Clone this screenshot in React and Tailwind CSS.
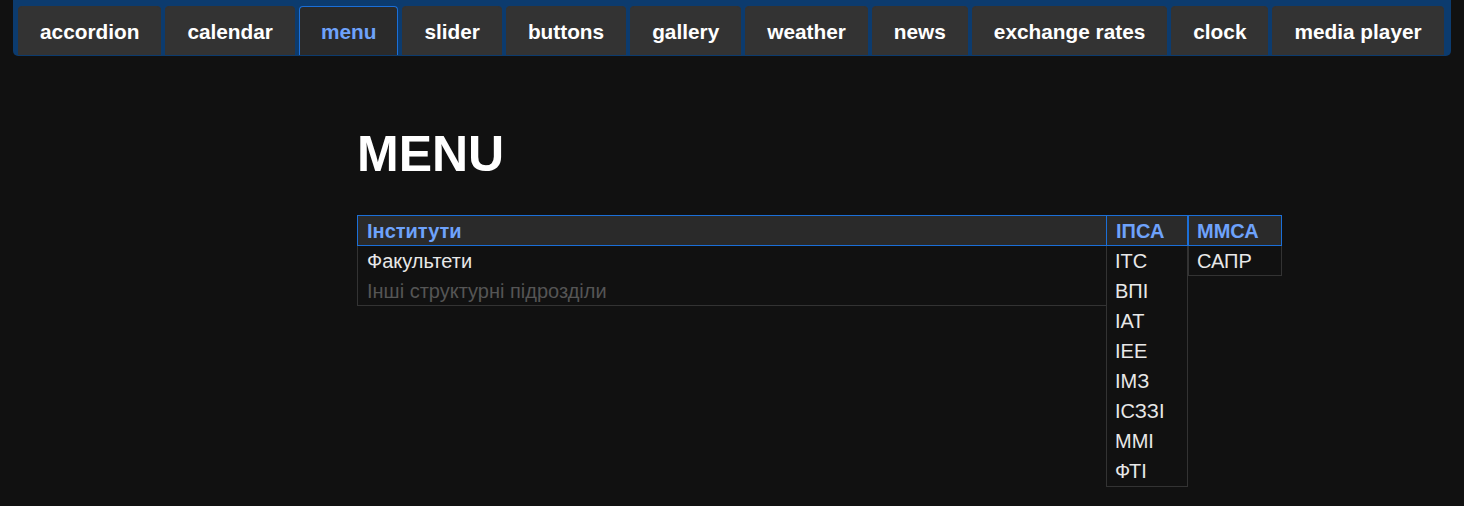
import React from "react";

const tabs = [
  "accordion",
  "calendar",
  "menu",
  "slider",
  "buttons",
  "gallery",
  "weather",
  "news",
  "exchange rates",
  "clock",
  "media player",
];

const ipsa = ["ІТС", "ВПІ", "ІАТ", "ІЕЕ", "ІМЗ", "ІСЗЗІ", "ММІ", "ФТІ"];

export default function App() {
  return (
    <div
      className="min-h-[506px] bg-[#111111] text-white"
      style={{ fontFamily: '"Liberation Sans", Arial, sans-serif' }}
    >
      <nav className="mx-[13px] flex gap-[4px] rounded-b-[5px] bg-[#0c3b6e] pl-[5px] pt-[6px] pb-[1px]">
        {tabs.map((t) => {
          const active = t === "menu";
          return (
            <div
              key={t}
              className={
                active
                  ? "flex h-[49px] shrink-0 items-center whitespace-nowrap rounded-t-[4px] border border-b-0 border-[#1b6fd8] bg-[#2a2a2a] px-[21px] pt-[1px] text-[20.8px] font-bold text-[#6ea2fb]"
                  : "flex h-[49px] shrink-0 items-center whitespace-nowrap rounded-t-[4px] border border-b-0 border-[#333333] bg-[#333333] px-[21px] pt-[1px] text-[20.8px] font-bold text-white"
              }
            >
              {t}
            </div>
          );
        })}
      </nav>

      <div className="mx-auto w-[750px]">
        <h1 className="mt-[73px] text-[50px] font-bold leading-none text-white">MENU</h1>

        <div className="relative mt-[36px] text-[20px]">
          <div className="flex h-[31px] items-center border border-[#1b6fd8] bg-[#2a2a2a] px-[9px] font-bold text-[#6ea2fb]">
            Інститути
          </div>
          <div className="border-x border-b border-[#333333]">
            <div className="flex h-[30px] items-center px-[9px] text-[#e8e8e8]">Факультети</div>
            <div className="flex h-[29px] items-center px-[9px] text-[#555555]">Інші структурні підрозділи</div>
          </div>

          <div className="absolute left-[749px] top-0 w-[82px]">
            <div className="flex h-[31px] items-center border border-[#1b6fd8] bg-[#2a2a2a] pl-[9px] font-bold text-[#6ea2fb]">
              ІПСА
            </div>
            <div className="border-x border-b border-[#333333] bg-[#111111]">
              {ipsa.map((s) => (
                <div key={s} className="flex h-[30px] items-center pl-[8px] text-[#e8e8e8]">
                  {s}
                </div>
              ))}
            </div>
          </div>

          <div className="absolute left-[831px] top-0 w-[94px]">
            <div className="flex h-[31px] items-center border border-[#1b6fd8] bg-[#2a2a2a] pl-[8px] font-bold text-[#6ea2fb]">
              ММСА
            </div>
            <div className="border-x border-b border-[#333333] bg-[#111111]">
              <div className="flex h-[29px] items-center pl-[8px] text-[#e8e8e8]">САПР</div>
            </div>
          </div>
        </div>
      </div>
    </div>
  );
}
